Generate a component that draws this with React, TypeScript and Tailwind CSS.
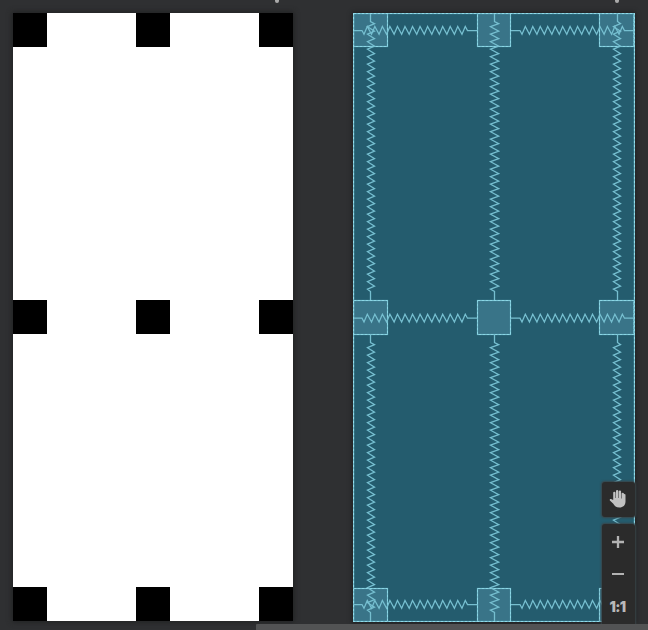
import React from "react";

function horizontalSpring(start: number, end: number, y: number): string {
  const points: string[] = [`M${start} ${y}H${start + 9}`];
  const step = (end - start - 18.5) / 14;
  for (let i = 0; i < 14; i++) {
    const x = start + 9 + i * step;
    points.push(`L${x + 2} ${y + 3.8}L${x + 5.3} ${y - 4}`);
  }
  points.push(`L${end - 9.5} ${y}H${end}`);
  return points.join("");
}

function verticalSpring(x: number, left: number, right: number, start: number, end: number): string {
  const points: string[] = [`M${x} ${start}V${start + 8.5}`];
  const count = 36;
  const step = (end - start - 17) / count;
  for (let i = 0; i < count; i++) {
    const y = start + 8.5 + i * step;
    points.push(`L${x + right} ${y + 2.2}L${x - left} ${y + 5.2}`);
  }
  points.push(`L${x} ${end - 8.5}V${end}`);
  return points.join("");
}

const columns = [
  { x: 0.5, w: 34 },
  { x: 124.5, w: 33 },
  { x: 246.5, w: 34.5 },
];
const rows = [
  { y: 0.5, h: 33 },
  { y: 287.5, h: 34 },
  { y: 575.5, h: 33 },
];
const verticals = [
  { x: 17.5, left: 3, right: 4 },
  { x: 141.5, left: 4, right: 4.2 },
  { x: 264.5, left: 4, right: 3 },
];

function Blueprint() {
  return (
    <svg width="282" height="609" viewBox="0 0 282 609" fill="none" className="block bg-[#245c6e] shadow-[0_0_4px_1px_#1f2022]">
      {rows.map((r) =>
        columns.map((c) => (
          <g key={`${c.x}-${r.y}`}>
            <rect x={c.x} y={r.y} width={c.w} height={r.h} fill="#397488" stroke="#6cb6c8" strokeWidth="1.2" />
            <rect x={c.x} y={r.y} width={c.w} height={r.h} stroke="#8bd6e5" strokeDasharray="3 1" />
          </g>
        )),
      )}
      <g stroke="#76bfd0">
        {[17.5, 305.2, 591.5].map((y) => (
          <React.Fragment key={y}>
            <path d={horizontalSpring(0, 124, y)} strokeWidth="1.25" />
            <path d={horizontalSpring(158, 281, y)} strokeWidth="1.25" />
          </React.Fragment>
        ))}
        {verticals.map((v) => (
          <React.Fragment key={v.x}>
            <path d={verticalSpring(v.x, v.left, v.right, 0, 287)} strokeWidth="1.3" />
            <path d={verticalSpring(v.x, v.left, v.right, 321, 608)} strokeWidth="1.3" />
          </React.Fragment>
        ))}
      </g>
      <rect x="0.5" y="0.5" width="281" height="608" stroke="#5aa3b5" strokeWidth="1.3" />
      <rect x="0.5" y="0.5" width="281" height="608" stroke="#91dbea" strokeWidth="1.2" strokeDasharray="3 1" />
    </svg>
  );
}

function DesignSurface() {
  return (
    <div className="flex h-[608px] w-[280px] flex-col justify-between bg-white shadow-[0_0_5px_1px_#202122]">
      {["top", "middle", "bottom"].map((row) => (
        <div key={row} className="flex justify-between">
          <div className="h-[34px] w-[34px] bg-black" />
          <div className="h-[34px] w-[34px] bg-black" />
          <div className="h-[34px] w-[34px] bg-black" />
        </div>
      ))}
    </div>
  );
}

function Controls() {
  return (
    <div className="absolute left-[602px] top-[482px] flex w-[33px] flex-col gap-[7px]">
      <button className="flex h-[35px] items-center justify-center rounded-[3px] bg-[#2b2b2b] pb-[1px] pr-[2px] shadow-[0_0_2px_1px_#3a4448]">
        <svg width="18" height="20" viewBox="0 0 18 20" className="block">
          <path
            d="M4.2 11V3.8a1.15 1.15 0 0 1 2.3 0V9h.5V2.1a1.15 1.15 0 0 1 2.3 0V9h.5V2.6a1.15 1.15 0 0 1 2.3 0V9.5h.5V4.8a1.15 1.15 0 0 1 2.3 0l1.6.6V12.5c0 3.8-2.4 6-6 6-3.5 0-4.9-1.4-6.2-3.7L.9 11.5c-.7-1.3.7-2.1 1.6-1.2Z"
            fill="#c1c1c1"
          />
        </svg>
      </button>
      <div className="flex h-[101px] flex-col items-center rounded-t-[3px] bg-[#2b2b2b] pr-[1px] pt-[11px] shadow-[0_0_2px_1px_#3a4448]">
        <svg width="14" height="14" viewBox="0 0 14 14" className="block">
          <path d="M7 1v12M1 7h12" stroke="#b3b3b3" strokeWidth="2.3" />
        </svg>
        <div className="mt-[24px] h-[2px] w-[12px] bg-[#b3b3b3]" />
        <span className="mr-[1px] mt-[25px] font-['Inter',sans-serif] text-[14px] font-black leading-[14px] tracking-[-0.6px] text-[#b9b9b9]">1:1</span>
      </div>
    </div>
  );
}

export default function App() {
  return (
    <main className="relative h-[630px] w-[648px] overflow-hidden bg-[#2f3032]">
      <div className="flex gap-[60px] pl-[13px] pt-[13px]">
        <DesignSurface />
        <Blueprint />
      </div>
      <span className="absolute left-[275px] top-[-2px] h-[5px] w-[4px] rounded-full bg-[#aaa]" />
      <span className="absolute left-[615px] top-[-2px] h-[5px] w-[4px] rounded-full bg-[#aaa]" />
      <Controls />
      <div className="absolute bottom-0 left-[256px] h-[6px] w-[392px] rounded-tl-[1px] bg-[#525354]" />
    </main>
  );
}
